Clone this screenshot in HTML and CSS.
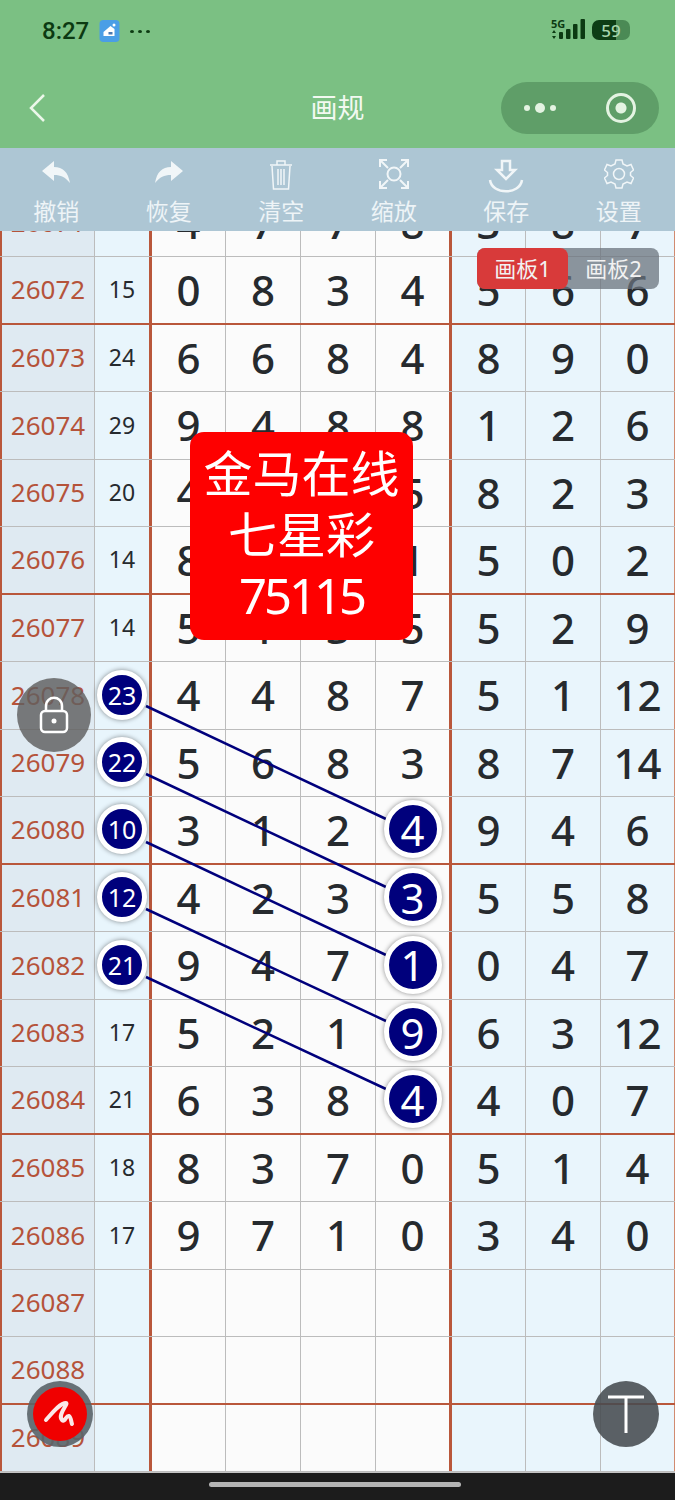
FILE: index.html
```html
<!DOCTYPE html>
<html lang="zh">
<head>
    <meta charset="UTF-8">
    <meta name="viewport" content="width=device-width, initial-scale=1.0">
    <title>画规</title>
    <link rel="stylesheet" href="styles.css">
</head>
<body>

<header class="top">
    <div class="status">
        <div class="status-left">
            <span class="time">8:27</span>
            <svg class="home-app" width="21" height="22" viewBox="0 0 20 22">
                <rect width="20" height="22" rx="4" fill="#4a9ee6"/>
                <path d="M4 12 L11 6 L15 9 V16 H4 Z" fill="#fff"/>
                <circle cx="14.500" cy="5" r="1.500" fill="#fff"/>
                <rect x="9" y="12" width="4" height="2.500" fill="#4a78b0"/>
            </svg>
            <span class="status-dots"><i></i><i></i><i></i></span>
        </div>
        <div class="status-right">
            <svg width="36" height="24" viewBox="0 0 36 24">
                <text x="0" y="10" class="net-label">5G</text>
                <path d="M3 12 l2 3 h-4 Z M3 21 l-2 -3 h4 Z" fill="#0c3a12"/>
                <rect x="8" y="14" width="4" height="7" rx="1" fill="#0c3a12"/>
                <rect x="15" y="11" width="4.500" height="10" rx="1" fill="#0c3a12"/>
                <rect x="22" y="6" width="4.500" height="15" rx="1" fill="#0c3a12"/>
                <rect x="29.500" y="1" width="4.500" height="20" rx="1" fill="#0c3a12"/>
            </svg>
            <span class="battery"><span class="battery-num">59</span></span>
        </div>
    </div>
    <nav class="nav">
        <svg class="back" width="18" height="30" viewBox="0 0 18 30">
            <path d="M16 2 L3 15 L16 28" fill="none" stroke="#ecf7ea" stroke-width="2.500"/>
        </svg>
        <h1 class="title">画规</h1>
        <div class="capsule">
            <span class="capsule-dots"><i></i><b></b><i></i></span>
            <span class="capsule-ring"></span>
        </div>
    </nav>
</header>

<div class="toolbar">
    <div class="tool">
        <svg width="30" height="28" viewBox="0 0 30 28"><path d="M1 12 L13 2 V8 C22 8 27 13 29 24 C24 18 20 16 13 16 V22 Z" fill="#f1f6f8"/></svg>
        <span>撤销</span>
    </div>
    <div class="tool">
        <svg width="30" height="28" viewBox="0 0 30 28"><path d="M29 12 L17 2 V8 C8 8 3 13 1 24 C6 18 10 16 17 16 V22 Z" fill="#f1f6f8"/></svg>
        <span>恢复</span>
    </div>
    <div class="tool">
        <svg width="26" height="32" viewBox="0 0 26 32" fill="none" stroke="#f1f6f8" stroke-width="1.500">
            <path d="M2 6 H24 M9 6 V2 H17 V6 M4 7 L5.500 30 H20.500 L22 7 M10 10 V26 M13 10 V26 M16 10 V26"/>
        </svg>
        <span>清空</span>
    </div>
    <div class="tool">
        <svg width="30" height="30" viewBox="0 0 30 30" fill="none" stroke="#f1f6f8" stroke-width="2">
            <path d="M1 8 V1 H8 M22 1 H29 V8 M1 22 V29 H8 M22 29 H29 V22 M2 2 L9 9 M28 2 L21 9 M2 28 L9 21 M28 28 L21 21"/>
            <circle cx="15" cy="15" r="6.500"/>
        </svg>
        <span>缩放</span>
    </div>
    <div class="tool">
        <svg width="36" height="34" viewBox="0 0 36 34" fill="none" stroke="#f1f6f8" stroke-width="2.500">
            <path d="M14 2 H22 V11 H27 L18 20 L9 11 H14 Z"/>
            <path d="M2 21 C4 36 32 36 34 21"/>
        </svg>
        <span>保存</span>
    </div>
    <div class="tool">
        <svg width="30" height="30" viewBox="0 0 30 30" fill="none" stroke="#f1f6f8" stroke-width="1.500">
            <path d="M12 1 H18 L19 5 L23 7 L27 5.500 L29.500 11 L26.500 13.500 V16.500 L29.500 19 L27 24.500 L23 23 L19 25 L18 29 H12 L11 25 L7 23 L3 24.500 L0.500 19 L3.500 16.500 V13.500 L0.500 11 L3 5.500 L7 7 L11 5 Z"/>
            <circle cx="15" cy="15" r="5.500"/>
        </svg>
        <span>设置</span>
    </div>
</div>

<main class="board">
    <div class="rows">
        <div class="row"><div class="id">26071</div><div class="sum">26</div><div>4</div><div>7</div><div>7</div><div>8</div><div class="alt">3</div><div class="alt">8</div><div class="alt">7</div></div>
        <div class="row end"><div class="id">26072</div><div class="sum">15</div><div>0</div><div>8</div><div>3</div><div>4</div><div class="alt">5</div><div class="alt">6</div><div class="alt">6</div></div>
        <div class="row"><div class="id">26073</div><div class="sum">24</div><div>6</div><div>6</div><div>8</div><div>4</div><div class="alt">8</div><div class="alt">9</div><div class="alt">0</div></div>
        <div class="row"><div class="id">26074</div><div class="sum">29</div><div>9</div><div>4</div><div>8</div><div>8</div><div class="alt">1</div><div class="alt">2</div><div class="alt">6</div></div>
        <div class="row"><div class="id">26075</div><div class="sum">20</div><div>4</div><div>3</div><div>8</div><div>5</div><div class="alt">8</div><div class="alt">2</div><div class="alt">3</div></div>
        <div class="row end"><div class="id">26076</div><div class="sum">14</div><div>8</div><div>2</div><div>3</div><div>1</div><div class="alt">5</div><div class="alt">0</div><div class="alt">2</div></div>
        <div class="row"><div class="id">26077</div><div class="sum">14</div><div>5</div><div>1</div><div>3</div><div>5</div><div class="alt">5</div><div class="alt">2</div><div class="alt">9</div></div>
        <div class="row"><div class="id">26078</div><div class="sum"><span class="ball">23</span></div><div>4</div><div>4</div><div>8</div><div>7</div><div class="alt">5</div><div class="alt">1</div><div class="alt">12</div></div>
        <div class="row"><div class="id">26079</div><div class="sum"><span class="ball">22</span></div><div>5</div><div>6</div><div>8</div><div>3</div><div class="alt">8</div><div class="alt">7</div><div class="alt">14</div></div>
        <div class="row end"><div class="id">26080</div><div class="sum"><span class="ball">10</span></div><div>3</div><div>1</div><div>2</div><div><span class="ball big">4</span></div><div class="alt">9</div><div class="alt">4</div><div class="alt">6</div></div>
        <div class="row"><div class="id">26081</div><div class="sum"><span class="ball">12</span></div><div>4</div><div>2</div><div>3</div><div><span class="ball big">3</span></div><div class="alt">5</div><div class="alt">5</div><div class="alt">8</div></div>
        <div class="row"><div class="id">26082</div><div class="sum"><span class="ball">21</span></div><div>9</div><div>4</div><div>7</div><div><span class="ball big">1</span></div><div class="alt">0</div><div class="alt">4</div><div class="alt">7</div></div>
        <div class="row"><div class="id">26083</div><div class="sum">17</div><div>5</div><div>2</div><div>1</div><div><span class="ball big">9</span></div><div class="alt">6</div><div class="alt">3</div><div class="alt">12</div></div>
        <div class="row end"><div class="id">26084</div><div class="sum">21</div><div>6</div><div>3</div><div>8</div><div><span class="ball big">4</span></div><div class="alt">4</div><div class="alt">0</div><div class="alt">7</div></div>
        <div class="row"><div class="id">26085</div><div class="sum">18</div><div>8</div><div>3</div><div>7</div><div>0</div><div class="alt">5</div><div class="alt">1</div><div class="alt">4</div></div>
        <div class="row"><div class="id">26086</div><div class="sum">17</div><div>9</div><div>7</div><div>1</div><div>0</div><div class="alt">3</div><div class="alt">4</div><div class="alt">0</div></div>
        <div class="row"><div class="id">26087</div><div class="sum"></div><div></div><div></div><div></div><div></div><div class="alt"></div><div class="alt"></div><div class="alt"></div></div>
        <div class="row end"><div class="id">26088</div><div class="sum"></div><div></div><div></div><div></div><div></div><div class="alt"></div><div class="alt"></div><div class="alt"></div></div>
        <div class="row"><div class="id">26089</div><div class="sum"></div><div></div><div></div><div></div><div></div><div class="alt"></div><div class="alt"></div><div class="alt"></div></div>
    </div>

    <!-- drawn lines, coordinates are relative to the board -->
    <svg class="lines" width="675" height="1241" viewBox="0 0 675 1241">
        <g stroke="#00007c" stroke-width="2.500">
            <line x1="146" y1="475" x2="386" y2="588"/>
            <line x1="146" y1="543" x2="386" y2="656"/>
            <line x1="146" y1="611" x2="386" y2="724"/>
            <line x1="146" y1="678" x2="386" y2="790"/>
            <line x1="146" y1="746" x2="386" y2="858"/>
        </g>
    </svg>

    <div class="tabs">
        <span class="tab on">画板1</span>
        <span class="tab">画板2</span>
    </div>

    <div class="notice">金马在线<br>七星彩<br><span class="notice-num">75115</span></div>

    <div class="float lock">
        <svg width="30" height="38" viewBox="0 0 30 38" fill="none" stroke="#fff" stroke-width="2.500">
            <rect x="2" y="15" width="26" height="21" rx="4"/>
            <path d="M7 15 V10 C7 -1 23 -1 23 10 V15"/>
            <circle cx="15" cy="25" r="2.500" fill="#fff" stroke="none"/>
        </svg>
    </div>

    <div class="float pen">
        <svg width="54" height="54" viewBox="0 0 54 54">
            <circle cx="27" cy="27" r="27" fill="#f00000"/>
            <path d="M13 33 C20 25 27 16 33 16 C36 16 24 28 29 33 C32 36 33 28 36 29 C38 30 38 34 39 37" fill="none" stroke="#fbe9e9" stroke-width="4" stroke-linecap="round"/>
        </svg>
    </div>

    <div class="float text-btn">
        <svg width="38" height="40" viewBox="0 0 38 40" fill="none" stroke="#fff" stroke-width="3">
            <path d="M1 3 H37 M19 3 V39"/>
        </svg>
    </div>
</main>

<footer class="home-bar"><span class="home-pill"></span></footer>

</body>
</html>
```

FILE: styles.css
```css
* {
    margin: 0;
    padding: 0;
    box-sizing: border-box;
}
body {
    width: 675px;
    height: 1500px;
    overflow: hidden;
    background: #1c1c1c;
    font-family: 'Noto Sans', 'Noto Sans CJK SC', sans-serif;
}

/* status bar + nav */
.top {
    height: 148px;
    background: #7bc083;
}
.status {
    height: 68px;
    padding: 18px 16px 0 42px;
    display: flex;
    justify-content: space-between;
    align-items: flex-start;
}
.status-left {
    display: flex;
    align-items: center;
    height: 26px;
}
.time {
    font-family: 'Roboto', sans-serif;
    font-size: 24px;
    font-weight: 500;
    color: #0c3a12;
    margin-right: 10px;
}
.status-dots {
    display: flex;
    gap: 4px;
    margin-left: 10px;
}
.status-dots i {
    width: 4px;
    height: 3px;
    border-radius: 50%;
    background: #0c3a12;
}
.status-right {
    display: flex;
    align-items: center;
    gap: 5px;
    padding-right: 29px;
}
.net-label {
    font-family: 'Noto Sans', sans-serif;
    font-size: 11px;
    font-weight: 700;
    fill: #0c3a12;
}
.battery {
    width: 38px;
    height: 20px;
    border-radius: 7px;
    background: linear-gradient(90deg, #0d3d15 0 62%, #4b8a55 62%);
    display: flex;
    align-items: center;
    justify-content: center;
}
.battery-num {
    font-size: 17px;
    font-weight: 500;
    color: #a7d5ad;
}
.nav {
    position: relative;
    height: 80px;
    display: flex;
    align-items: center;
    justify-content: center;
}
.back {
    position: absolute;
    left: 28px;
    top: 25px;
}
.title {
    font-size: 27px;
    font-weight: 400;
    color: #f2f9f1;
    line-height: 36px;
}
.capsule {
    position: absolute;
    left: 501px;
    top: 14px;
    width: 158px;
    height: 52px;
    border-radius: 26px;
    background: #5f9e68;
    display: flex;
    align-items: center;
    padding: 0 23px;
    justify-content: space-between;
}
.capsule-dots {
    display: flex;
    align-items: center;
    gap: 5px;
}
.capsule-dots i {
    width: 6px;
    height: 6px;
    border-radius: 50%;
    background: #e4f3e2;
}
.capsule-dots b {
    width: 10px;
    height: 10px;
    border-radius: 50%;
    background: #e4f3e2;
}
.capsule-ring {
    width: 30px;
    height: 30px;
    border: 3.500px solid #e4f3e2;
    border-radius: 50%;
    background: radial-gradient(circle, #e4f3e2 0 5px, transparent 6px);
}

/* tools */
.toolbar {
    height: 83px;
    background: #adc6d4;
    display: grid;
    grid-template-columns: repeat(6, 1fr);
    overflow: hidden;
}
.tool {
    position: relative;
    text-align: center;
    color: #eef4f7;
    font-size: 23px;
}
.tool svg {
    position: absolute;
    left: 50%;
    top: 11px;
    transform: translateX(-50%);
}
.tool span {
    position: absolute;
    left: 0;
    right: 0;
    top: 47px;
    line-height: 32px;
}

/* number table */
.board {
    position: relative;
    height: 1241px;
    overflow: hidden;
    background: #fbfbfb;
}
.rows {
    margin-top: -41.5px;
}
.row {
    height: 67.5px;
    display: grid;
    grid-template-columns: 95px 57px 74px 75px 75px 76px 74px 75px 74px;
    border-bottom: 1px solid #bcbcbc;
    font-size: 42px;
    font-weight: 500;
    color: #262a2e;
}
.row.end {
    border-bottom: 2.500px solid #b9573b;
}
.row > div {
    display: flex;
    align-items: center;
    justify-content: center;
    padding-bottom: 1px;
    border-right: 1px solid #bcbcbc;
    background: #fbfbfb;
}
.row > .alt {
    background: #e9f5fc;
}
.row > .alt:last-child {
    border-right: 1px solid #d18a70;
}
.row > .id {
    font-size: 26px;
    font-weight: 400;
    color: #b5533a;
    background: #dfeaf2;
    border-left: 2.500px solid #b9573b;
}
.row > .sum {
    font-size: 23px;
    font-weight: 400;
    color: #262a2e;
    background: #e8f5fc;
    border-right: 3px solid #b9573b;
}
.row > div:nth-child(6) {
    border-right: 3px solid #b9573b;
}
.ball {
    position: relative;
    z-index: 2;
    width: 50px;
    height: 50px;
    border: 5px solid #fff;
    border-radius: 50%;
    background: #00007c;
    color: #fff;
    font-size: 25px;
    font-weight: 400;
    display: flex;
    align-items: center;
    justify-content: center;
    box-shadow: 0 0 5px rgba(0, 0, 0, 0.45);
}
.ball.big {
    width: 58px;
    height: 58px;
    font-size: 42px;
}
.lines {
    position: absolute;
    left: 0;
    top: 0;
    z-index: 1;
}

/* overlays */
.tabs {
    position: absolute;
    left: 477px;
    top: 17px;
    width: 182px;
    height: 41px;
    border-radius: 8px;
    background: rgba(105, 115, 125, 0.75);
    display: flex;
    z-index: 3;
}
.tab {
    flex: 1;
    border-radius: 8px;
    color: #f2f2f2;
    font-size: 22px;
    line-height: 41px;
    text-align: center;
}
.tab.on {
    background: #d83a3a;
}
.notice {
    position: absolute;
    left: 190px;
    top: 201px;
    width: 223px;
    height: 208px;
    border-radius: 14px;
    background: #fe0000;
    color: #fff;
    font-size: 49px;
    line-height: 61px;
    text-align: center;
    padding-top: 11px;
    z-index: 3;
}
.notice-num {
    letter-spacing: -3px;
}
.float {
    position: absolute;
    border-radius: 50%;
    display: flex;
    align-items: center;
    justify-content: center;
    z-index: 4;
}
.lock {
    left: 17px;
    top: 447px;
    width: 74px;
    height: 74px;
    background: rgba(95, 95, 95, 0.82);
}
.pen {
    left: 27px;
    top: 1150px;
    width: 66px;
    height: 66px;
    background: rgba(90, 100, 105, 0.9);
}
.text-btn {
    left: 593px;
    top: 1150px;
    width: 66px;
    height: 66px;
    background: rgba(70, 75, 80, 0.88);
}

.home-bar {
    height: 28px;
    padding-top: 9px;
    padding-right: 6px;
    display: flex;
    justify-content: center;
    align-items: flex-start;
    background: #1c1c1c;
    border-top: 1px solid #c4c4c4;
}
.home-pill {
    width: 252px;
    height: 5px;
    border-radius: 3px;
    background: #b4b4b4;
}
```
